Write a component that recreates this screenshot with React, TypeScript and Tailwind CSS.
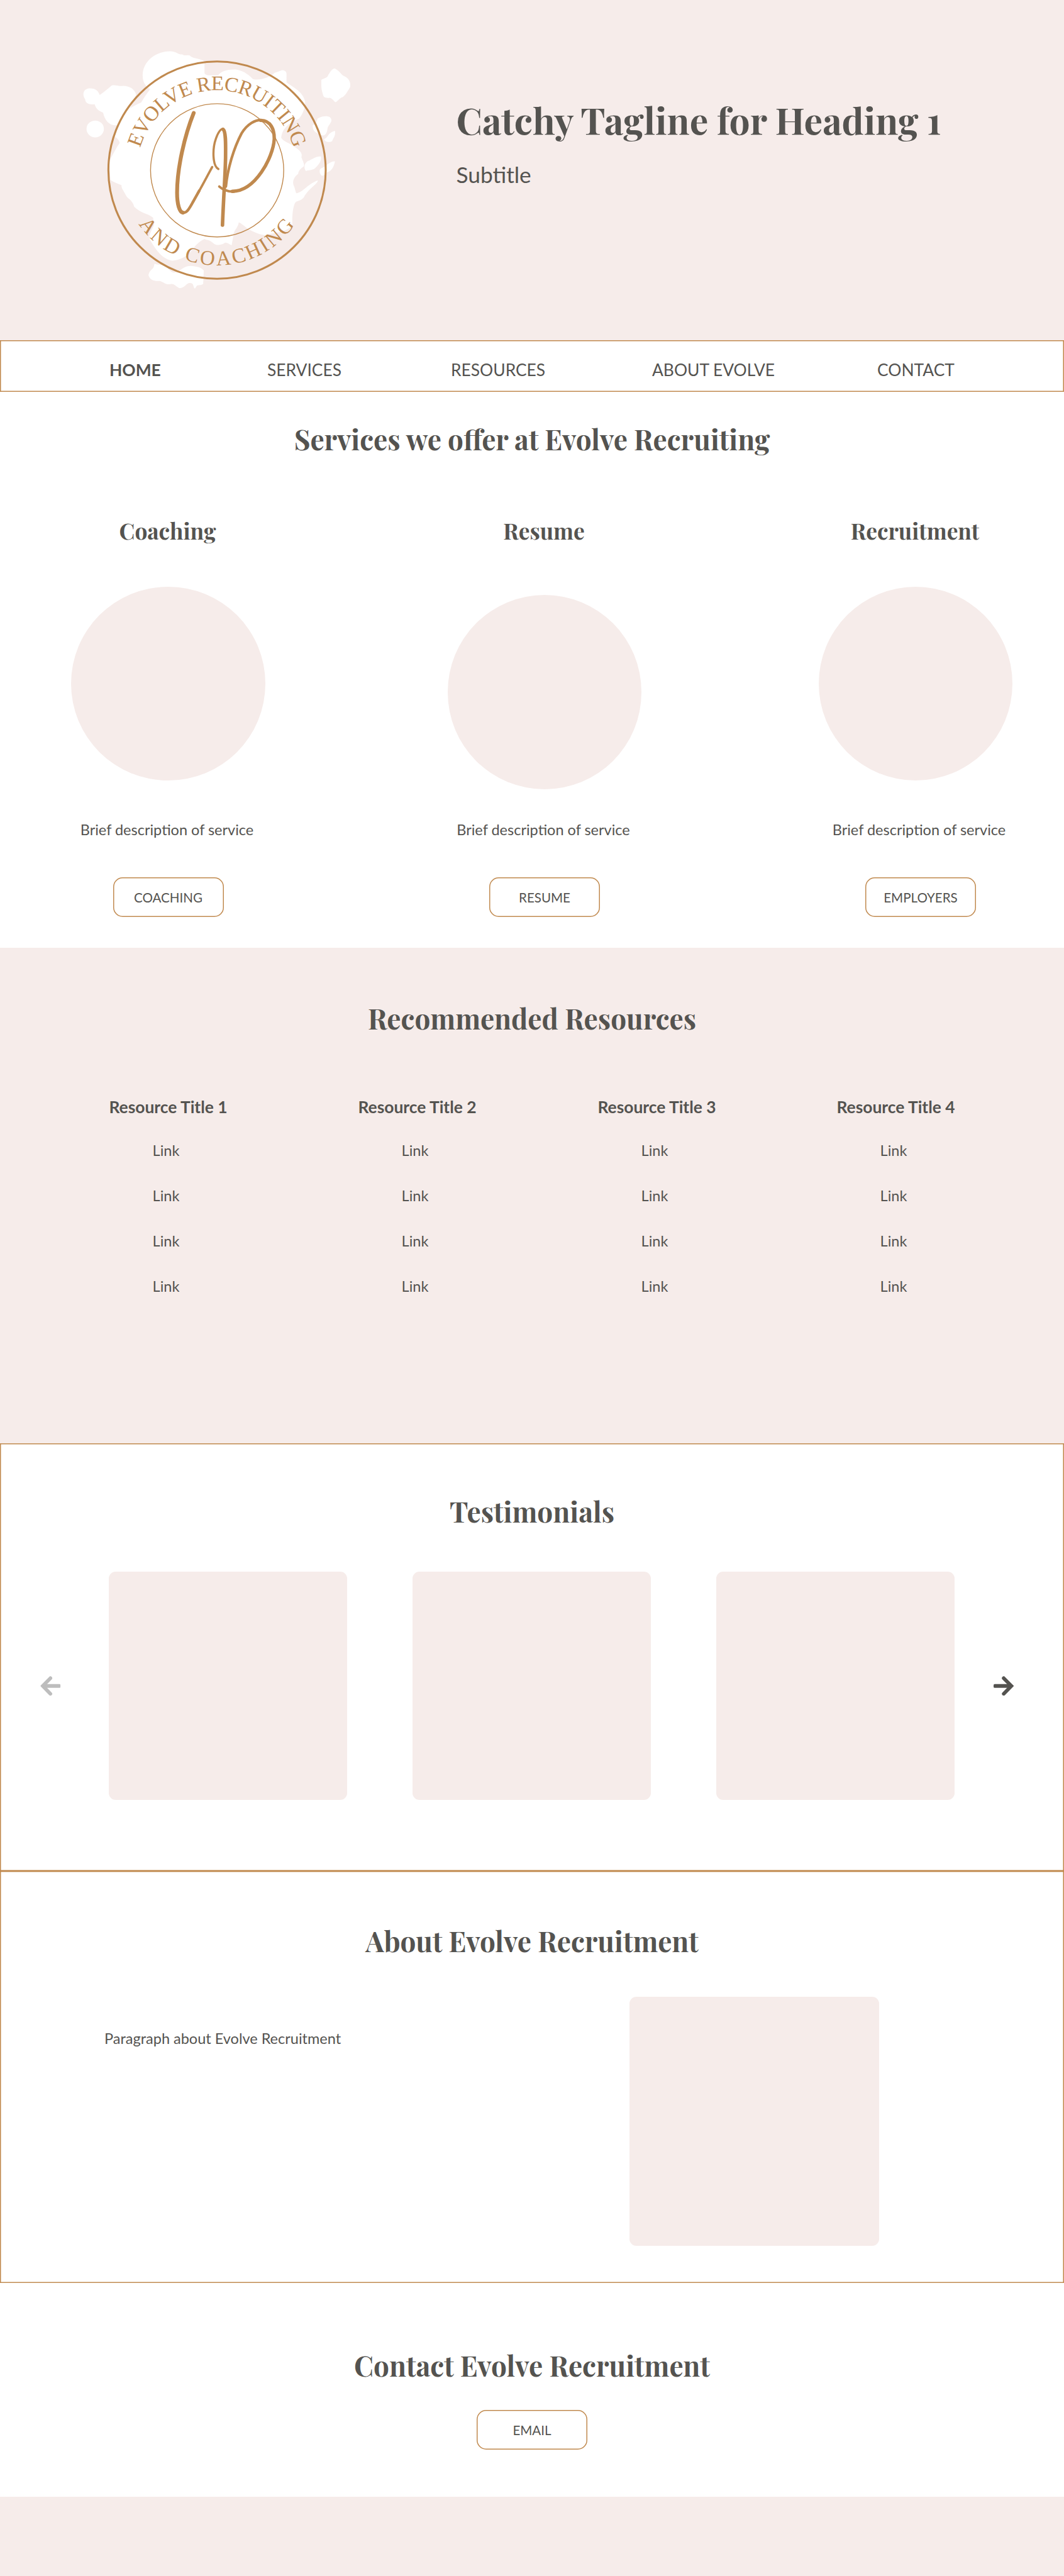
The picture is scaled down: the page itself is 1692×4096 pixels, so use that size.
const display = "font-['Playfair_Display','Liberation_Serif',serif] font-bold whitespace-nowrap";

function Logo() {
  return (
    <svg viewBox="0 0 640 570" className="block h-[418.6px] w-[470px]" fill="none">
      <g transform="scale(0.40816 0.36352)" fill="#ffffff">
        <path d="M390 220C395 140 460 85 535 84C570 86 580 105 600 103C615 115 625 103 640 110C650 128 690 125 718 145L718 215Q725 228 745 228L790 228C805 200 850 190 885 193C915 198 945 215 975 250C1010 262 1070 238 1090 213Q1110 206 1130 197Q1150 200 1153 215L1153 270C1190 300 1240 325 1252 385C1250 420 1245 450 1220 485C1170 510 1130 540 1125 600C1140 625 1170 630 1190 650C1220 670 1240 690 1232 715C1240 740 1250 760 1245 770C1225 785 1215 800 1215 815C1190 835 1185 860 1190 880C1200 905 1200 920 1205 930C1240 925 1260 880 1318 853C1325 870 1270 900 1245 955C1225 980 1210 970 1198 988C1185 1020 1182 1080 1184 1120C1150 1165 1100 1160 1040 1180C1000 1175 960 1150 940 1135C920 1115 905 1105 900 1103C895 1140 870 1150 870 1190L862 1240C845 1230 830 1215 820 1230C800 1240 785 1240 770 1232C745 1205 730 1210 718 1202C690 1215 670 1240 650 1270C625 1310 590 1325 550 1332C490 1325 450 1250 425 1200Q422 1180 450 1120L445 1075C420 1050 380 1050 345 1010C335 970 310 960 305 950C290 915 275 900 278 882C255 870 235 865 218 850L213 740C230 700 250 660 268 630C265 610 245 595 240 590L258 525C215 530 190 500 180 450C145 435 140 415 135 400C95 405 85 385 85 370C70 350 70 310 105 305C140 303 155 320 162 345C185 325 205 310 225 288C250 283 260 295 285 290C320 290 350 310 355 345L322 425C345 410 360 400 382 390C395 365 400 355 430 310C400 290 388 260 390 220Z" />
        <path d="M1408 186C1430 195 1445 225 1455 230C1490 245 1495 280 1490 300C1475 325 1465 350 1450 358C1430 365 1425 385 1412 388C1400 375 1390 358 1378 362Q1350 365 1347 345C1338 310 1337 300 1338 255C1350 245 1370 245 1375 225C1385 205 1395 190 1408 186Z" />
        <ellipse cx="138" cy="547" rx="46" ry="50" />
        <path d="M1318 485C1350 465 1395 465 1391 500C1385 520 1370 530 1370 550C1365 590 1345 590 1335 582C1310 570 1290 560 1292 525C1305 520 1312 510 1318 485Z" />
        <path d="M1410 558C1415 590 1400 600 1395 620C1380 630 1355 625 1352 607C1375 600 1370 570 1410 558Z" />
        <path d="M1336 712C1340 740 1320 765 1300 785C1285 795 1270 790 1257 798C1240 780 1250 740 1275 735C1300 720 1320 708 1336 712Z" />
        <path d="M1410 740C1405 770 1395 790 1380 800C1355 810 1360 825 1340 826C1325 810 1325 785 1340 780C1365 770 1380 740 1410 740Z" />
        <path d="M452 1350C480 1360 500 1350 510 1362C530 1385 545 1405 555 1403C590 1400 600 1365 645 1363C690 1368 700 1375 714 1390L711 1470C700 1480 685 1475 678 1480L667 1498C655 1490 665 1465 640 1465C620 1465 615 1495 585 1496C560 1480 555 1465 535 1472C510 1475 505 1460 480 1452C455 1455 430 1450 421 1420C425 1380 450 1390 452 1350Z" />
      </g>
      <g transform="translate(210 150) scale(0.33333)" stroke="#c0894e" strokeLinecap="round" strokeLinejoin="round">
        <path strokeWidth="25" d="M179 43C120 190 71 400 71 560C71 635 86 685 108 690" />
        <path strokeWidth="18" d="M100 684C130 708 152 660 176 618C186 600 200 575 215 548" />
        <path strokeWidth="15" d="M205 566C240 505 268 450 299 394" />
        <path strokeWidth="14" d="M339 407C300 385 300 275 323 210C338 168 352 147 368 146" />
        <path strokeWidth="23" d="M370 149C390 165 386 260 386 330C384 450 372 600 366 771" />
        <path strokeWidth="17" d="M388 520C400 400 440 270 490 175C530 110 580 89 615 89" />
        <path strokeWidth="22" d="M615 91C680 92 704 150 702 215C695 330 580 552 430 552" />
        <path strokeWidth="16" d="M440 554C395 555 360 535 345 521" />
      </g>
      <circle cx="320.2" cy="288" r="235.3" stroke="#c0894e" strokeWidth="4.2" />
      <circle cx="320.4" cy="288.4" r="144.2" stroke="#c0894e" strokeWidth="1.9" />
      <path id="arc-top" d="M153.7 240.3A173 173 0 0 1 486.3 240.3" />
      <path id="arc-bottom" d="M150.2 404.7A206 206 0 0 0 489.8 404.7" />
      <g fill="#c0894e" fontSize="45" fontFamily="'Liberation Serif', serif">
        <text textLength="447">
          <textPath href="#arc-top">EVOLVE RECRUITING</textPath>
        </text>
        <text textLength="396">
          <textPath href="#arc-bottom">AND COACHING</textPath>
        </text>
      </g>
    </svg>
  );
}

function H2({ children }: { children: string }) {
  return <h2 className={display + " text-center text-[44.06px] leading-[60px]"}>{children}</h2>;
}

function Button({ children, className = "" }: { children: string; className?: string }) {
  return (
    <button
      className={
        "flex h-[63px] w-[176px] shrink-0 items-center justify-center rounded-[15px] bg-white pt-px text-[20.56px] leading-[24px] shadow-[inset_0_0_0_1.5px_#c0894e] " +
        className
      }
    >
      {children}
    </button>
  );
}

function Arrow({ className = "" }: { className?: string }) {
  return (
    <svg viewBox="0 0 44 43" className={"h-[31.6px] w-[32.3px] shrink-0 " + className} fill="none">
      <rect x="0" y="17.5" width="38" height="8" rx="2.5" fill="currentColor" />
      <path d="M22 4.6L38.6 21.5L22 38.4" stroke="currentColor" strokeWidth="7.8" strokeLinecap="round" strokeLinejoin="miter" />
    </svg>
  );
}

const services = [
  { title: "Coaching", button: "COACHING", circle: "mt-[64.6px] mb-[63.9px]", text: "mr-[4px]", shift: "" },
  { title: "Resume", button: "RESUME", circle: "mt-[78px] mb-[50.5px]", text: "mr-[4px]", shift: "" },
  { title: "Recruitment", button: "EMPLOYERS", circle: "mt-[64.6px] mb-[63.9px]", text: "ml-[11px]", shift: "ml-[16px]" },
];

const resources = ["Resource Title 1", "Resource Title 2", "Resource Title 3", "Resource Title 4"];

export default function App() {
  return (
    <div className="flex h-[4096px] w-[1692px] flex-col overflow-hidden bg-white font-['Lato',sans-serif] text-[#545350]">
      <header className="flex h-[541px] shrink-0 bg-[#f6ecea] pt-[59px] pl-[110px]">
        <Logo />
        <div className="pt-[93px] pl-[145.5px]">
          <h1 className={display + " text-[58.75px] leading-[76px]"}>Catchy Tagline for Heading 1</h1>
          <p className="mt-[26px] text-[35.25px] leading-[48px]">Subtitle</p>
        </div>
      </header>

      <nav className="grid h-[82px] shrink-0 grid-cols-[251px_292px_320px_358px_auto] items-center pt-[12px] pl-[174px] text-[26.4px] leading-[32px] shadow-[inset_0_0_0_1.5px_#c0894e]">
        <a className="font-bold">HOME</a>
        <a>SERVICES</a>
        <a>RESOURCES</a>
        <a>ABOUT EVOLVE</a>
        <a>CONTACT</a>
      </nav>

      <section className="h-[884px] shrink-0 pt-[45px]">
        <H2>Services we offer at Evolve Recruiting</H2>
        <div className="mt-[92px] grid grid-cols-[535px_662px_518px] text-[23.5px] leading-[28px]">
          {services.map((s) => (
            <div key={s.title} className="flex flex-col items-center">
              <h3 className={display + " mr-[2px] text-[35.25px] leading-[48px]"}>{s.title}</h3>
              <div className={"size-[308.5px] rounded-full bg-[#f6ecea] " + s.circle} />
              <p className={s.text}>Brief description of service</p>
              <Button className={"mt-[62px] " + s.shift}>{s.button}</Button>
            </div>
          ))}
        </div>
      </section>

      <section className="h-[788px] shrink-0 bg-[#f6ecea] pt-[82px]">
        <H2>Recommended Resources</H2>
        <div className="mt-[95px] grid grid-cols-[396px_381px_380px_auto] pl-[173.5px]">
          {resources.map((title) => (
            <div key={title} className="flex w-[188px] flex-col items-center text-[23.5px]">
              <h4 className="text-[26.4px] leading-[32px] font-bold whitespace-nowrap">{title}</h4>
              <ul className="mt-[17px] pr-[7px]">
                {[0, 1, 2, 3].map((i) => (
                  <li key={i} className="h-[72px] leading-[72px]">Link</li>
                ))}
              </ul>
            </div>
          ))}
        </div>
      </section>

      <section className="h-[679.5px] shrink-0 pt-[78px] shadow-[inset_0_0_0_1.5px_#c0894e]">
        <H2>Testimonials</H2>
        <div className="mt-[66px] flex items-center pl-[64px]">
          <Arrow className="rotate-180 text-[#bdbdbd]" />
          <div className="ml-[77.2px] flex gap-[104px]">
            <div className="h-[363px] w-[379px] rounded-[11px] bg-[#f6ecea]" />
            <div className="h-[363px] w-[379px] rounded-[11px] bg-[#f6ecea]" />
            <div className="h-[363px] w-[379px] rounded-[11px] bg-[#f6ecea]" />
          </div>
          <Arrow className="ml-[62px]" />
        </div>
      </section>

      <section className="h-[655.5px] shrink-0 pt-[81.5px] shadow-[inset_0_0_0_1.5px_#c0894e]">
        <H2>About Evolve Recruitment</H2>
        <div className="mt-[58.5px] flex pl-[166px]">
          <p className="w-[835.3px] pt-[52px] text-[23.5px] leading-[28px]">Paragraph about Evolve Recruitment</p>
          <div className="size-[396.6px] rounded-[11px] bg-[#f6ecea]" />
        </div>
      </section>

      <section className="flex h-[340px] shrink-0 flex-col items-center pt-[101px]">
        <H2>Contact Evolve Recruitment</H2>
        <Button className="mt-[40.5px]">EMAIL</Button>
      </section>

      <footer className="grow bg-[#f6ecea]" />
    </div>
  );
}
